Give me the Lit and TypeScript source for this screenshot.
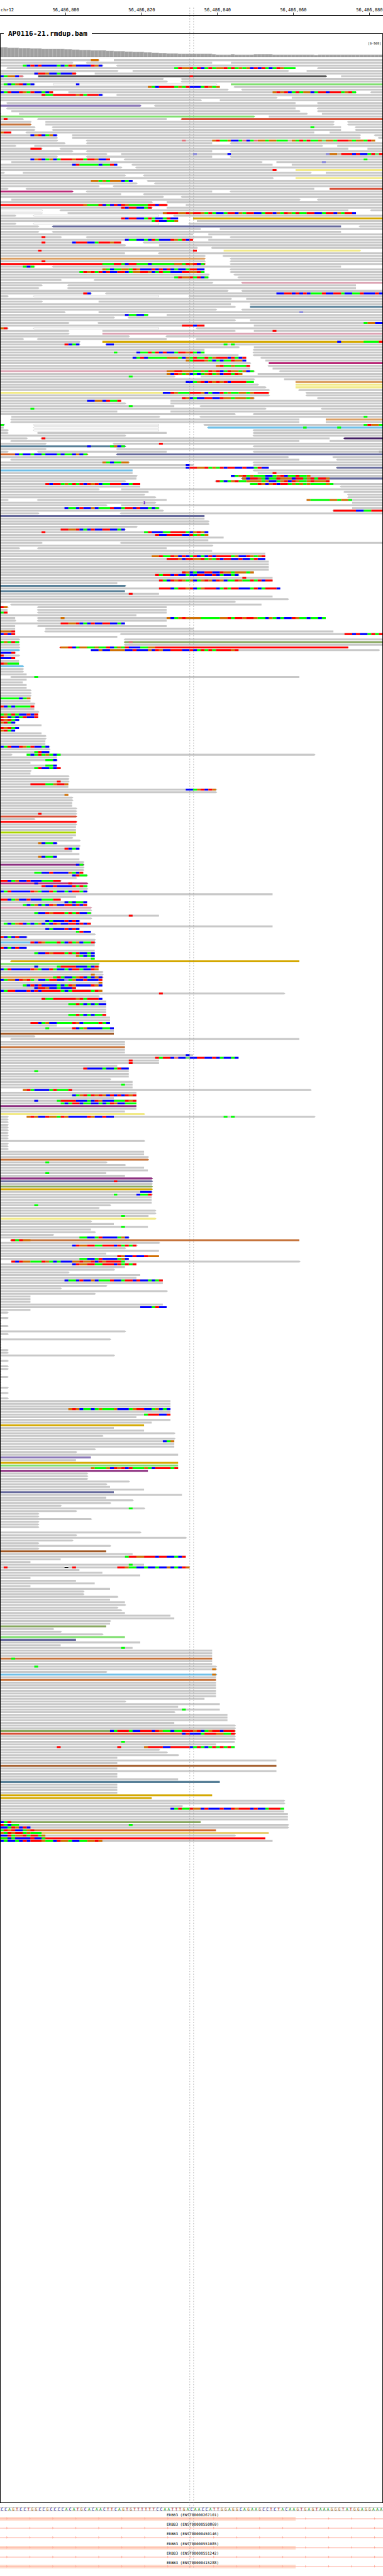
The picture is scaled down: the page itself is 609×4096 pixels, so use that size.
import { LitElement, html, svg, css } from "lit";
import { customElement } from "lit/decorators.js";

/*
 * One line per row of the pileup, positions counted in bases from the left edge.
 *   19>  <23-56  61-    reads; "<" and ">" mark the strand tip, a leading letter the read colour
 *   @6GBR4              mismatching bases from position 6 on; lower case is low quality
 *   I38                 insertion, *3 repeats the row
 */
const PILEUP = `26> 30- @24O2
19> <23-56 61-
27> <31- @6GBRBRB4GBGROB4ROB
<2-78 <84- @46GRO2RGRBGRGO2RGRGOGOBRBRGBGROG3
31> 35-76> 81-
20> 25- @9BR2OB2GB3R
6> @0BGO2Br k10-86> @50R 90-
43> <48-
44> <48-
9> @1GBGORBGB w14-57> @20B g61-
58 @39OGBR4GOGRB3GROGO <62-
60> <64-
14 @0BGRB2ROGRB2GBR 18-94> @72ORORBGRGO2BGR2BR3GORG <98-
27> @11RG2R6ORGR3B <31-
73> 77-
53> 58-
<2-78 <84-
p37> <41-
<2-78 <84-
3-79> <84-
0> 5-81> 85-
g67> 71-
6> @1R <10-44 t<48-
8> 12-88> <92-
c8> 12-88> <92-
9> <14-90 @82G <94-
9> <14-90 <94-
3 @0OR2 <7-83 87-
15> @8BORBGOB 19-95> <99-
15> 19-95> <100-
15> <23-99 @48r @56ORG2OB2GrBGrO2GO2G3oOGRGRG2OgO2GR3OGO2GRO
17> <23-56 <61-
4> 9-85> 89-
11> @8R3 <16-92 97-
19> <23-56 <61-
28> 32- @51b @60B @86bO2oR3BRB2GRgR
15> <23-56 <61-
29 @8BORBGOBGR3OR2GR2OB2R <33- @96G
3-69> 73- @85b
31 @19BRG5BG2RB <35-72 77-
32> <36-
73> @72R y78-
1> 6-82> 86-
33> <38-
72> y78-
35 @24O2GOGO3BGB <39-
36> <41-
26> <30-
2> <7-83 t87-
m19> <23-56 <61-
32 <38-
43> <48-
3-79> <84-
40> 44-
r44> @22OG3RBGBRBROG5R2BR2 49-
40> @32RBR2B2GR 44-
w11> <16-92 <98-
w11> <18-94 @43OR3O2ROR2OGRGB2GR2BOGR2B2GR2BOGROGRG2R2B2GR2BOGR2B
4> w<9-42 <46-
47 @32RBR2B2GRGB2GRB2 d51-
47 @40GRB2G2O 52-
4> w<9-42 <50-
10> s<14-90 <95-
53 58-
10> <14-90
51 55-
16> @11R <23-56 <61-
51 @33BG2B2GBRGB3ROGRBR 55-
32 @11R @19BR3B2GR3OR2 <38-
33> 42-
52> <56-
52 @10R @51R y59-95>
33 <42-
54> <59-
o54> <61-
54> @11R <61-
r54> @27G3R2GBR2G3BG6O2GRORBG <61-
9> @6GBG <14-90
54 @27OGBG2O2GROB3RBRBRBGB2GR2B2 <61-
54 @21GRORGRBRB2R2BGO2R2OBGRG2B3R2O2RG <61-
55> <62-
55> @46GRO2RGRBG <63-
16> <25-
56> i<64-
11> <18-94
10> <18-94
60> <64-
24> @22RB <28- @73B2R2BRBRBG3RB2R2GB2G2RB3RB
2> w<9-42 <50-
61> 65-
11> 26-
61 66-
62> e66-
57> <64-
17> 26- @79b
39> @33BG2B2G 44-
30> <34-
62> 66-
18> <26- @96GO2B2
54 @48R3BR2 67-
2> @0OR w<9-42 <52-
18> 27-62> 67- @72R
18> i27-
34> <44-
6> <10-44 <52-
21> d27- @89B @96G4R
21> @17RBGB <28- @28B2 @59G @61G
63> 67-
54 <67-
54 @30G @36BG2RGRBRB2GR2ORGBG <67-
63 <67-
65 @35BGRBG5O3GBOGRG2RGOR3BRGBR <69-
65 @49OGR3OGBGBG2RO2B 70-
66> m71-
66 @57ORG2OG3R <71-
66 72-
i67> @44O2R2O3G2OGRORBGRO2GOBG <74-
64 @44OBROGOBGBGORGOBR2GRO 68-
46> @34G 53-
67> 75-
67 @49B2GORBRORORBR4G2 o78-
68> y78-
70> y78-
71> <79-
y71> @43B2ROG3R3OBGB2RGOG2O2GOR4 <81-
71> <81-
67> @48ROBGB2R2B2RO2GO3GO <84-
32 @23B2O2BRG2R 45-
33> 45-
46 @34G <53-
70> @8G <85-
31 45-
62> <67-
3-42> <53- @96G
<3-79 o86-
<3-79 86-
e1> @0G w<9-42 <54- @96GRO2G
1 w<9-42 l<55- @80G @89G
2> w<9-42 <67-
2> <10-44 <67-
33> <67-
7> <11-87 @11R u<91-
<3-79 87-
12> <30- @42R
e33> @23B @29GOBG <67-
12> <31-
2> <10-44 <67- h100-
f23> @4BGB2GB2GB3GBG2BOBG s<31-
76> <88-
<3-79 <89-
34> @27OGBG2O2 <67-
51> @49B <67-
71 @49BR2O2RGOGRBR2B2RB2GRB2 s<89-
l35 <67-
35 68- @72R
36> 61- @61BGORGOG3B2GORBG2RG2O
36 s<64- @64OBR2OGBG2RO3BR2GORGR2O
33> <57-87 @57RGBGORG2O4GOB2GORBROG2ORO3R
37 @12RBR2GOGRGRBRORBG2R3B2GR2 66- @66G2ROBORBR2GOGOGOG4OG
37 <90-
26> 32-
39> <91-
38> <92-
41> <92-
2> <10-44 81- @81OG5O2GO2G
41> I38 93-
28> 32-
42> @17BG2BRB2OBG3RB2GR2BRB2GBG 93-
43> <88- @88R6B2G2R3
10> <32-
s54
54
55> *2
36>
33> @16R2O2RBGBRB2R2B2GB
55 @11R @38GRB3G2R4GBOROB
55 @41RB2R4B2RGOGO
59
55
11> <32-
56>
5> <10-44
56
70
70 @40O2RG2ROBRBGRBGBRBR4GOB2ROGOR
70 @44R3OBR2O2RGOGRBR2B2RB2GRB2
71 *4
67 @48ROBGB2R2B2RO2GO3GO
63> @41RGR2BRB2GB2R2B2RBGB2GB
72 @64R
72 @42RGBROROGOBGOROBROBG2ROG2RGRBR2
31
e33>
74 @42R3BGR2ORBGOR3BGRGR2B3GRBGR3B
e33
42 @34R
72
76>
62>
<3-69
2> @0RO <10-44
2 <10-44
2 @0GR <10-44
36
4 <10-86 @16O @44OBGORO4G5O2RGR2OR2OG2BOGBGB2ROG2BG2BG
4> <10-44
33 @16R2O2RBGBRB2R2B2GB
4 <10-44
4 12-51>
4 @0O3R <12-88
4 @0BRBR <32- @91R2BRB2GRGR
31
5> <33-
5> @0GOGRG v<33- @34r
5> <33-
5> r<16-92 @16O2RBGO2G2OG2RBGOGRB3G2O2
l5> 24-100> @24B2OB2O4B2RB3OBROB2R3B2RBGRGRGR4OR
4> @0B3R
5> @0R
4 @0B3R
5
5 @0ROG3
l6>
6> *2
7
<3-79 @9G
7
6
7 *2
8> *3
8 @0G5BGO
8
9>
9 @0RBGBG4R
9
10>
10 @0GOGRGB2RBR
10 @0ROBGBGRB2R
5> @0RORGB
4> @0ORGB
11
5 @0RORGB
4 @0ORGB
11
12> *2
12 *2
13> @0BGRB2ROGRB2GB
13>
13> @9GRB2
3> 7-83> @7GBGRGOGBG
15
15> @12G2B
8
15 @12G2B
16 @9GRB2GBR
8>
8
18> *2
18> @15R
18 @8R4G2OR2O
18
57> @49B2GORBRO
57>
18 @17O
19> *2
19 *2
20> *2
20> @10R
t20>
9>
r20>
20>
20 *2
z20
20
19>
21>
15> @10OBG2B
21>
21 @17RBGB
19
21
15 @10OBG2B
21
22>
q22> @20BG
22> *2
22 @9G2B2RB4OGBR
23> @19BRG2
20>
16> @0R2BGOB2RB3G3R2
m23> @9B @18R
23> @11RB2RB4RGRG
23>
23> @0BGRB5ROGB2RGB2GBR2GB
72
20
16 @0R2BGOB2RB3G3R2
23 @17BGBG2B
23 @6GBGOBGBROB2R2BRBR
i24>
24>
24> @9GB2ROR3GRGRB2G
42 @34R
24>
21> @12BGB3RBRB
24 @1GBGORBGBGOBGBROB2R2BRBR
72
21 @12BGB3RBRB
24 @20GRB2
25>
7> @0RBGBRB2
25>
l25> @8RBROG3RGBRGOBG2R
25
7 @0RBGBRB2
25
25 @9GB2ROR3GRGRB2GB
25 @20OGBGB
25 @24G
d<3-79
g26>
26> @9B @15GR4B3GBR
26 @0BGRB5ROGB2RGB2GBR2GB2RO
27>
27> @24O
o27> @14GRGB2GORBGBOB
27 @0BGO2BRORGoB2GR2B2bGOB2RB3R
27 @26O
27 @6GBRBRB4GBGROB4ROB
20 @9BR2OB2GB3R
27 @0BGR2B3RBRBR5GBGR5GRO
75> @42R
26>
27 @11RG2R6ORGR3B
28
28 @18G2RGBGBGB2
28 *3
28 @18G2RGBGBG2R
29 *2
29 @8R2BGOB2G4ROBG4RGB
15
30 @12G @19RBGOB4G2B
30
b30
9>
<3-79
33 *2
c33
33 *2
51 @49B
63 @41RGR2BrB2gB2R2B2RBGB2GB
42 @34R *2
31
34 @22RB4GB2GRB2
34 @9G
34 *2
29>
35
35 @32G
35
0> 6-82> @6ORGB4GRG3R
36
36 @19BGORGROROBRBRBROR
30
36 @9B @15GR4B3GBROB3G3ROR
36 @16GBGR2BG2B2GBGROB2G3
q36
36
33
y38>
2> 7-83> @7OROB2RO2GROB5ROB2RB2 @59G @61G
2> *8
38>
2> *3
38 *2
39>
c39>
28> @12G
33>
38
39
28 @12G
33
q40>
s40> @30R
40>
v40>
d40>
40> @37B3
40> @30G @36BG2R
40 *3
29> @9G
26>
41> *2
39> @32G
y41>
24>
30
39 @32G
24
25>
14>
34> @21G2B2GRB4GOB
c<3-79 @3RGRO2
42>
36> @19BRO2R2G2R3BRGRGR
33>
42
28
42 @31ROB2RB2RO3
34 @21G2B2GRB4GOB
3-79> @3RBRO2G3ROGBGB3O2RO2RBROR4G
36 @19BRO2R2G2R3BRGRGR
33
30>
18>
37
36
43 @17BG2BRB2OBG3RB2GR2BRB2GBGR
43
28>
16>
44>
25>
8 *3
43
44 @37B3GRB2
8
2>
0>
2>
0> *2
2>
0>
33>
2>
0>
29>
0> *3
2> *2
30>
0>
2>
0>
2> *2
0> *2
2>
0> *3
2>
0>
2>
0>
2>
45 *3
45 @18OROBG2BGOG3OB3GOR2B2GOBGB
45
45 @38GR3B2R
36
45
40
d38
30
38
46>
27>
46>
46 @43BGO
46 *2
25>
20>
47
p24
20
d47
g47
47 @24OG3OBRORBRG3OGBR4GR
q39
23> *3
34>
28>
29
38
s30
48
28
35>
29>
16>
38> @34G
20>
10> *2
24>
10> *3
0>
37>
20>
49>
19>
10>
29>
10>
b28
35
49 @33GR2O2R3BR2B2GBR
16
8
38 @34G
17 x17-18 18-50 @1R @19R @31R2OG2B2GB2GB2OBGBRO
21
27
37
8
20
25
8
29
22> *2
31>
29
33
33>
31>
32>
33
45
46
29>
29
v28
14>
16>
27>
g33
s20
37
16
35 @32G
56 *3
c56 @3G
56 *2
57> @9G
57> @56O
28>
l57> @56O
57
c57
57 *6
54
33>
58
47
58 @48G
46>
60 *3
46
62> *2
v62> @29BGR3GB2R3BROG2BG2R3ORBGOR2BR3
t62> @48BRB3GR3O2G2R
62> *2
62 @32G
57
62 @15R @31R @38OR4B2R5BGRGBGRGRGRG
42>
44>
47>
31
73
31
b73
31
73
31 *2
47
e58
31 *4
d56
d40
75> *2
48>
75 @45BGRG2RO2BRB3RB2ROR3BRB2GR3G
75
76 *3
v53 @0BGR
76> @0RGBG2 @34G
76> @0B2GROBRB
f57 @0GRORB2GOR
n71 @0OGRORRGOG3
62> @0B2RGO2RGR2GO
r70 @0G2BGB4RB2G
72 @0BGB2GBRBR3OG2BRO2GB2G2O2RO`;

const READ_COLOURS: Record<string, string> = {
  "": "#c8c8c8", k: "#505050", g: "#80df70", p: "#8b78b8", t: "#d85038", c: "#c6743c",
  y: "#f2ea88", m: "#b92a78", d: "#d4a800", s: "#666a9c", o: "#dca064", i: "#dca4b4",
  e: "#588098", u: "#442064", l: "#70c0e8", f: "#d26428", r: "#ff0000", v: "#88a860",
  b: "#a05824", z: "#aad400", q: "#8c3080", n: "#e8d074", h: "#b0b0b0",
};

const BASE_COLOURS: Record<string, string> = {
  G: "#00ff00", B: "#0000ff", R: "#ff0000", O: "#d17105",
  g: "#64e064", b: "#8c8cdc", r: "#e07078", o: "#ccb498",
};

const BASES = 101;
const WIDTH = 1000;
const PITCH = 7;
const FIRST_ROW = 154;
const at = (base: number) => Math.floor((base * WIDTH) / BASES);

function drawPileup() {
  const reads = new Map<string, string>();
  const bases = new Map<string, string>();
  let outlines = "";
  let inserts = "";
  let gaps = "";
  const add = (m: Map<string, string>, key: string, d: string) => m.set(key, (m.get(key) ?? "") + d);
  let y = FIRST_ROW;

  for (const line of PILEUP.split("\n")) {
    const times = Number(/\*(\d+)/.exec(line)?.[1] ?? 1);
    for (let n = 0; n < times; n++, y += PITCH) {
      for (const token of line.split(" ")) {
        if (token[0] === "*") continue;
        if (token[0] === "@") {
          let pos = parseInt(token.slice(1), 10);
          for (const [, letter, count] of token.matchAll(/([A-Za-z])(\d*)/g)) {
            const next = pos + Number(count || 1);
            add(bases, letter, `M${at(pos)} ${y}H${at(next)}v5H${at(pos)}z`);
            pos = next;
          }
          continue;
        }
        if (token[0] === "I") {
          const x = at(Number(token.slice(1)));
          inserts += `M${x - 1} ${y - 1}h4v2h-1v3h1v2h-4v-2h1v-3h-1z`;
          continue;
        }
        const m = /^([a-z]?)(<?)(?:(\d+)-)?(\d*)(>?)$/.exec(token)!;
        const x0 = at(Number(m[3] ?? 0));
        const x1 = m[4] === "" ? WIDTH : at(Number(m[4]));
        if (m[1] === "x") {
          gaps += `M${x0} ${y + 2}H${x1}v2H${x0}z`;
          continue;
        }
        const inset = m[1] === "w" ? 0.5 : 0;
        const half = 2.5 - inset;
        const d =
          `M${x0 + inset} ${y + inset}H${x1 - inset}` +
          (m[5] ? `l3.5 ${half}l-3.5 ${half}` : `v${half * 2}`) +
          `H${x0 + inset}` +
          (m[2] ? `l-3.5 ${-half}z` : "z");
        if (m[1] === "w") outlines += d;
        else add(reads, m[1], d);
      }
    }
  }

  return svg`
    ${[...reads].map(([key, d]) => svg`<path fill=${READ_COLOURS[key]} d=${d}></path>`)}
    <path fill="#fff" stroke="#c8c8c8" d=${outlines}></path>
    ${[...bases].map(([key, d]) => svg`<path fill=${BASE_COLOURS[key]} d=${d}></path>`)}
    <path fill="#7020d0" d=${inserts}></path>
    <path fill="#000" d=${gaps}></path>`;
}

/* [last base, top of the bar] */
const COVERAGE: [number, number][] = [
  [2, 123], [5, 124], [8, 125], [11, 126], [17, 127], [19, 128], [21, 129], [24, 130], [28, 131],
  [30, 132], [33, 133], [35, 134], [38, 135], [40, 136], [42, 137], [44, 138], [47, 139], [56, 140],
  [57, 141], [61, 142], [62, 141], [67, 142], [72, 141], [83, 142], [84, 143], [101, 142],
];

function drawCoverage() {
  let outer = "";
  let inner = "";
  let base = 0;
  for (const [end, top] of COVERAGE) {
    outer += `M${at(base)} ${top}H${at(end)}V148H${at(base)}z`;
    for (; base < end; base++) inner += `M${at(base)} ${top + 1}h8V148h-8z`;
  }
  return svg`
    <path fill="#b6b6b6" d=${outer}></path>
    <path fill="#a0a0a0" d=${inner}></path>
    <path fill="#6e6e6e" d="M0 148h1000v1H0z"></path>`;
}

const TICKS = ["56,486,800", "56,486,820", "56,486,840", "56,486,860", "56,486,880"];
const SEQUENCE =
  "CCAGTCCTGGCCGCCCCACATGCACAACTTCAGTGTTTTTTCCAATTTGACAACCATTGGAGGCAGAAGCCTCTACAAGTGAGTAAAGGGTATGGAGGAAA";
const TRANSCRIPTS = [
  { id: "ENST00000267101", exon: true },
  { id: "ENST00000550869", exon: false },
  { id: "ENST00000450146", exon: false },
  { id: "ENST00000551085", exon: true },
  { id: "ENST00000551242", exon: false },
  { id: "ENST00000415288", exon: true },
];
const ARROWS = Array.from({ length: 17 }, (_, i) => `M${17 + i * 60} 1l3 3.5l-3 3.5z`).join("");

@customElement("app-root")
export class AppRoot extends LitElement {
  static styles = css`
    :host {
      display: block;
      background: #fff;
      color: #000;
      font-family: "DejaVu Sans Mono", monospace;
    }
    .page {
      position: relative;
      box-sizing: border-box;
      min-height: 100vh;
      padding-bottom: 9px;
      overflow: hidden;
    }
    svg {
      display: block;
      width: 100%;
    }
    .ruler {
      display: grid;
      grid-template-columns: 73fr repeat(4, 198fr) 64fr 71fr;
      padding-top: 13px;
      border-bottom: 1px solid #000;
      font-size: 7px;
      line-height: 7px;
      white-space: nowrap;
    }
    .chrom {
      padding-left: 1px;
    }
    .tick {
      display: flex;
      flex-direction: column;
      align-items: center;
    }
    .tick::after {
      content: "";
      width: 1px;
      height: 4px;
      background: #333;
    }
    .tick:last-child {
      grid-column: 7;
    }
    .track {
      min-width: 0;
      margin: 22px 0 0;
      padding: 0;
      border: 1px solid #000;
    }
    .name {
      margin-left: 5px;
      padding: 0 7px;
      font-size: 11px;
      font-weight: bold;
      line-height: 13px;
    }
    .range {
      padding: 6px 2px 1px;
      font-size: 5px;
      line-height: 7px;
      text-align: right;
    }
    .reads {
      aspect-ratio: 607 / 3905;
    }
    .sequence {
      display: grid;
      grid-template-columns: repeat(101, minmax(0, 1fr));
      margin-top: 6px;
      border: solid #a8a8a8;
      border-width: 1px 0;
      font-size: 6px;
      line-height: 5px;
      text-align: center;
    }
    .A { color: #009600; }
    .C { color: #000096; }
    .G { color: #a86000; }
    .T { color: #b00000; }
    .genes {
      display: grid;
      grid-auto-rows: 1fr;
      min-height: 91px;
      margin: 3px 0 0;
      padding: 0;
      list-style: none;
    }
    .gene {
      font-size: 6px;
      line-height: 6px;
      text-align: center;
    }
    .label {
      padding-left: 4px;
    }
    .model {
      height: 6px;
    }
    .guides {
      position: absolute;
      inset: 0;
      height: 100%;
      pointer-events: none;
    }
  `;

  render() {
    return html`
      <main class="page">
        <header class="ruler">
          <span class="chrom">chr12</span>
          ${TICKS.map((t) => html`<span class="tick">${t}</span>`)}
        </header>
        <fieldset class="track">
          <legend class="name">AP0116-21.rmdup.bam</legend>
          <div class="range">[0-909]</div>
          <svg class="reads" viewBox="1 121 998 6410" preserveAspectRatio="none" aria-hidden="true">
            ${drawCoverage()} ${drawPileup()}
          </svg>
        </fieldset>
        <div class="sequence">
          ${[...SEQUENCE].map((base) => html`<span class=${base}>${base}</span>`)}
        </div>
        <ul class="genes">
          ${TRANSCRIPTS.map(
            (t) => html`
              <li class="gene">
                <div class="label">ERBB3 (${t.id})</div>
                <svg class="model" viewBox="0 0 1000 10" preserveAspectRatio="none" aria-hidden="true">
                  ${t.exon ? svg`<path fill="#ffdccc" d="M0 0h772v10H0z"></path>` : null}
                  <path fill="#ffaa9a" d="M0 4h1000v2H0z"></path>
                  <path fill="#ffaa9a" d=${ARROWS}></path>
                </svg>
              </li>
            `
          )}
        </ul>
        <svg class="guides" viewBox="0 0 1000 6723" preserveAspectRatio="none" aria-hidden="true">
          <path fill="none" stroke="#888" stroke-dasharray="3 4" d="M495.5 20V6701M505.5 20V6701"></path>
        </svg>
      </main>
    `;
  }
}
